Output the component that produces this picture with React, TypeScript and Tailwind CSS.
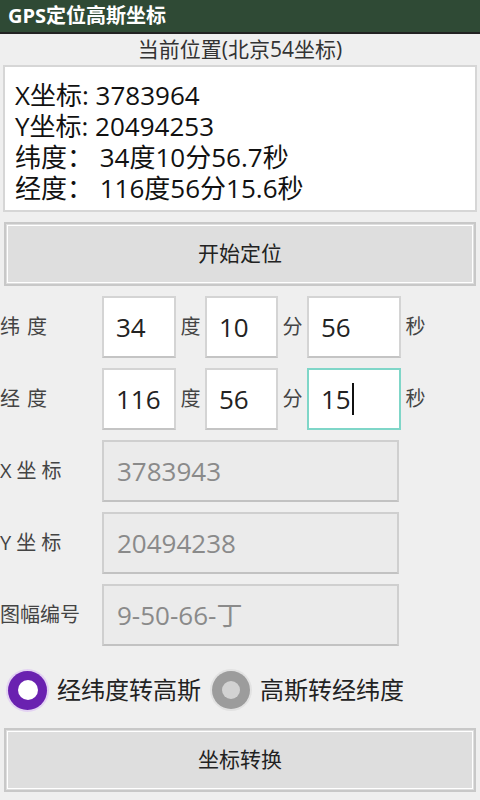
import React from "react";

const font = { fontFamily: '"Open Sans", "Noto Sans CJK SC", sans-serif' };

function Field({ value, w, focused }: { value: string; w: string; focused?: boolean }) {
  return (
    <div
      className={`${w} h-[62px] flex items-center pl-[12px] text-[26px] text-[#222] bg-white border-2 ${
        focused ? "border-[#7fd6c8]" : "border-[#d4d4d4] border-b-[#c4c4c4]"
      }`}
    >
      {value}
      {focused && <span className="inline-block w-[2px] h-[32px] bg-[#111] ml-[1px]" />}
    </div>
  );
}

function DisabledField({ value }: { value: string }) {
  return (
    <div className="w-[297px] h-[62px] flex items-center pl-[13px] text-[26px] text-[#8a8a8a] bg-[#ebebeb] border-2 border-[#cfcfcf] border-b-[#c2c2c2]">
      {value}
    </div>
  );
}

export default function App() {
  const unit = "w-[29px] text-center text-[20px] text-[#444]";
  const label = "w-[102px] text-[20px] text-[#444]";
  return (
    <div style={font} className="w-[480px] h-[800px] bg-[#efefef] overflow-hidden">
      <div className="h-[34px] bg-[#2f4a35] border-b-2 border-[#222] flex items-center pl-[8px] text-white text-[20px] font-bold">
        GPS定位高斯坐标
      </div>
      <div className="h-[31px] flex items-center justify-center text-[21px] text-[#333]">当前位置(北京54坐标)</div>
      <div className="mx-[3px] h-[147px] bg-white border-2 border-[#d6d6d6] pt-[13px] pl-[10px] text-[26px] leading-[30px] text-[#111]">
        <div>X坐标: 3783964</div>
        <div className="mt-[1px]">Y坐标: 20494253</div>
        <div className="mt-[1px]">纬度：  34度10分56.7秒</div>
        <div className="mt-[1px]">经度：  116度56分15.6秒</div>
      </div>
      <button className="mt-[10px] mx-[4px] w-[472px] h-[64px] bg-[#dedede] border-2 border-[#c8c8c8] outline outline-1 outline-white -outline-offset-4 text-[21px] text-[#222]">
        开始定位
      </button>
      <div className="mt-[10px] flex items-center">
        <div className={`${label} tracking-[7px]`}>纬度</div>
        <Field value="34" w="w-[74px]" />
        <div className={unit}>度</div>
        <Field value="10" w="w-[73px]" />
        <div className={unit}>分</div>
        <Field value="56" w="w-[94px]" />
        <div className={unit}>秒</div>
      </div>
      <div className="mt-[10px] flex items-center">
        <div className={`${label} tracking-[7px]`}>经度</div>
        <Field value="116" w="w-[74px]" />
        <div className={unit}>度</div>
        <Field value="56" w="w-[73px]" />
        <div className={unit}>分</div>
        <Field value="15" w="w-[94px]" focused />
        <div className={unit}>秒</div>
      </div>
      <div className="mt-[10px] flex flex-col gap-[10px]">
        <div className="flex items-center">
          <div className={`${label} tracking-[5px]`}>X坐标</div>
          <DisabledField value="3783943" />
        </div>
        <div className="flex items-center">
          <div className={`${label} tracking-[5px]`}>Y坐标</div>
          <DisabledField value="20494238" />
        </div>
        <div className="flex items-center">
          <div className={label}>图幅编号</div>
          <DisabledField value="9-50-66-丁" />
        </div>
      </div>
      <div className="mt-[24px] flex items-center pl-[8px] h-[40px]">
        <div className="w-[39px] h-[39px] rounded-full bg-[#6a21b0] ring-2 ring-[#e3d2f2] flex items-center justify-center">
          <div className="w-[20px] h-[20px] rounded-full bg-white" />
        </div>
        <div className="ml-[10px] text-[24px] text-[#222]">经纬度转高斯</div>
        <div className="ml-[11px] w-[38px] h-[38px] rounded-full bg-[#9c9c9c] ring-2 ring-[#e2e2e2] flex items-center justify-center">
          <div className="w-[18px] h-[18px] rounded-full bg-[#d2d2d2]" />
        </div>
        <div className="ml-[10px] text-[24px] text-[#222]">高斯转经纬度</div>
      </div>
      <button className="mt-[18px] mx-[4px] w-[472px] h-[64px] bg-[#dedede] border-2 border-[#c8c8c8] outline outline-1 outline-white -outline-offset-4 text-[21px] text-[#222]">
        坐标转换
      </button>
    </div>
  );
}
